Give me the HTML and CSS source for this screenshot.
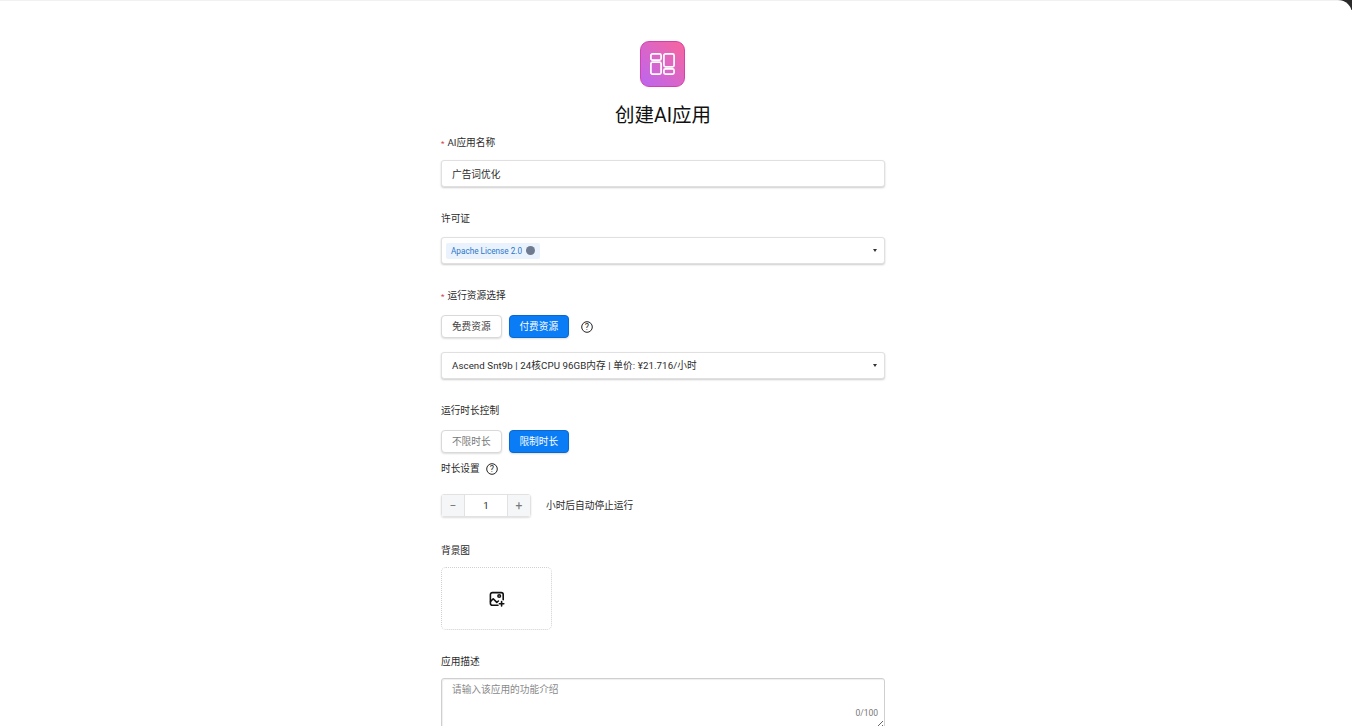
FILE: index.html
```html
<!DOCTYPE html>
<html lang="zh-CN">
<head>
  <meta charset="UTF-8" />
  <meta name="viewport" content="width=device-width, initial-scale=1.0"/>
  <title>创建AI应用</title>
  <link rel="stylesheet" href="styles.css">
</head>
<body>
  <div class="corner"></div>

  <main class="page">
    <div class="app-icon">
      <svg viewBox="0 0 25 22" width="25" height="22" fill="none" stroke="#fff" stroke-width="1.7">
        <rect x="0.9" y="0.9" width="10.2" height="6.2" rx="1.6"/>
        <rect x="0.9" y="9.2" width="10.2" height="11.9" rx="1.6"/>
        <rect x="13.9" y="0.9" width="10.2" height="12.9" rx="1.6"/>
        <rect x="13.9" y="15.9" width="10.2" height="5.2" rx="1.6"/>
      </svg>
    </div>
    <h1>创建AI应用</h1>

    <form class="form">
      <div class="field">
        <label class="required">AI应用名称</label>
        <input class="text-input" type="text" value="广告词优化">
      </div>

      <div class="field">
        <label class="gap-m">许可证</label>
        <div class="select tag-select">
          <span class="tag">Apache License 2.0 <i class="tag-close"></i></span>
          <span class="caret"></span>
        </div>
      </div>

      <div class="field">
        <label class="required gap-l">运行资源选择</label>
        <div class="btn-row">
          <button type="button" class="btn">免费资源</button>
          <button type="button" class="btn active">付费资源</button>
          <svg class="help help-row" viewBox="0 0 12 12" width="12" height="12">
            <circle cx="6" cy="6" r="5.3" fill="none" stroke="#222" stroke-width="1"/>
            <text x="6" y="9" text-anchor="middle" class="help-mark">?</text>
          </svg>
        </div>
        <div class="select">
          <span class="spec">Ascend Snt9b | 24核CPU 96GB内存 | 单价: ¥21.716/小时</span>
          <span class="caret"></span>
        </div>
      </div>

      <div class="field">
        <label class="gap-l">运行时长控制</label>
        <div class="btn-row">
          <button type="button" class="btn muted">不限时长</button>
          <button type="button" class="btn active">限制时长</button>
        </div>
        <label class="sub-label">时长设置
          <svg class="help" viewBox="0 0 12 12" width="12" height="12">
            <circle cx="6" cy="6" r="5.3" fill="none" stroke="#222" stroke-width="1"/>
            <text x="6" y="9" text-anchor="middle" class="help-mark">?</text>
          </svg>
        </label>
        <div class="stepper-row">
          <div class="stepper">
            <span class="step">−</span>
            <span class="step-value">1</span>
            <span class="step">+</span>
          </div>
          <span>小时后自动停止运行</span>
        </div>
      </div>

      <div class="field">
        <label class="gap-s">背景图</label>
        <div class="upload">
          <svg viewBox="0 0 16 16" width="16" height="16" fill="none" stroke="#111" stroke-width="1.6" stroke-linecap="round" stroke-linejoin="round">
            <path d="M9 14.2H3.4a2 2 0 0 1-2-2V3.6a2 2 0 0 1 2-2h8.8a2 2 0 0 1 2 2v5.2"/>
            <path d="M1.6 10.4l2.6-2.6 3.6 3.6 1.6-1.4"/>
            <circle cx="10.2" cy="5" r="1.3"/>
            <path d="M12.6 10.6v4.4M10.4 12.8h4.4"/>
          </svg>
        </div>
      </div>

      <div class="field">
        <label class="gap-s">应用描述</label>
        <div class="textarea-wrap">
          <textarea class="textarea" placeholder="请输入该应用的功能介绍"></textarea>
          <span class="count">0/100</span>
        </div>
      </div>
    </form>
  </main>
</body>
</html>
```

FILE: styles.css
```css
:root {
  --primary: #0a7cf5;
  --line: #e0e0e0;
  --fg: #2b2b2b;
}

* {
  box-sizing: border-box;
}

html, body {
  height: 726px;
  overflow: hidden;
}

body {
  margin: 0;
  background: #fff;
  color: var(--fg);
  font-family: "Roboto", "Noto Sans CJK SC", sans-serif;
  font-size: 9.7px;
  line-height: 14px;
  border-top: 1px solid #f1f1f1;
}

.corner {
  position: absolute;
  top: 0;
  right: 0;
  width: 14px;
  height: 10px;
  overflow: hidden;
}

.corner::before {
  content: "";
  position: absolute;
  top: 0;
  right: 0;
  width: 40px;
  height: 40px;
  border-top-right-radius: 14px;
  box-shadow: 10px -10px 0 10px #2a2a2a;
}

.page {
  display: flex;
  flex-direction: column;
  align-items: center;
  padding: 40px 26px 0 0;
}

.app-icon {
  width: 45px;
  height: 46px;
  margin-right: 1px;
  border-radius: 9px;
  border: 1px solid #d63fae;
  background: linear-gradient(45deg, #bb66f2, #f9659c);
  display: flex;
  align-items: center;
  justify-content: center;
}

h1 {
  height: 28px;
  margin: 15px 0 0;
  font-size: 19.5px;
  line-height: 28px;
  font-weight: 400;
  color: #111;
}

.form {
  width: 444px;
  display: flex;
  flex-direction: column;
  gap: 24px;
  margin-top: 5px;
}

.field {
  display: flex;
  flex-direction: column;
}

.field > label {
  height: 14px;
  line-height: 16px;
  margin-bottom: 11px;
}

.field > .gap-s {
  margin-bottom: 10px;
}

.field > .gap-m {
  margin-bottom: 12px;
}

.field > .gap-l {
  margin-bottom: 13px;
}

.required::before {
  content: "*";
  color: #d9363e;
  font-size: 8px;
  margin-right: 3px;
}

.text-input,
.select {
  width: 100%;
  height: 27px;
  border: 1px solid var(--line);
  border-radius: 3px;
  box-shadow: 0 1px 2px #0003;
  background: #fff;
  font: inherit;
  color: var(--fg);
}

.text-input {
  padding: 0 10px;
}

.select {
  padding: 0 10px;
  display: flex;
  align-items: center;
  justify-content: space-between;
}

.spec {
  letter-spacing: 0.08px;
}

.tag-select {
  padding-left: 4px;
}

.tag {
  display: flex;
  align-items: center;
  gap: 4px;
  height: 16px;
  padding: 0 5px;
  border-radius: 2px;
  background: #eaf3fd;
  color: #2a76c9;
  font-size: 8.2px;
}

.tag-close {
  width: 9px;
  height: 9px;
  border-radius: 50%;
  background: #6e7a90;
}

.caret {
  width: 0;
  height: 0;
  border-left: 2.5px solid transparent;
  border-right: 2.5px solid transparent;
  border-top: 3px solid #333;
  margin-right: -3px;
}

.btn-row {
  display: flex;
  align-items: center;
  gap: 7px;
}

.field > .btn-row + .select {
  margin-top: 14px;
}

.btn {
  width: 60.5px;
  height: 23px;
  padding: 0;
  border: 1px solid #d9d9d9;
  border-radius: 4px;
  background: #fff;
  box-shadow: 0 1px 2px #0002;
  color: #444;
  font: inherit;
}

.btn.muted {
  color: #777;
}

.btn.active {
  background: var(--primary);
  border-color: #0a68d0;
  color: #fff;
}

.help {
  display: block;
}

.help-row {
  margin-left: 5px;
}

.help-mark {
  font-size: 9px;
  fill: #222;
}

.sub-label {
  display: flex;
  align-items: center;
  gap: 6px;
  margin-top: 9px;
}

.field > .sub-label {
  margin-bottom: 18px;
}

.stepper-row {
  display: flex;
  align-items: center;
  gap: 15px;
  margin-bottom: 2px;
}

.stepper {
  width: 90px;
  height: 23px;
  display: flex;
  border: 1px solid #e2e2e2;
  border-radius: 3px;
  box-shadow: 0 1px 2px #0002;
}

.step {
  width: 22px;
  background: #f5f6f7;
  color: #777;
  font-size: 12px;
  display: flex;
  align-items: center;
  justify-content: center;
}

.step-value {
  flex: 1;
  display: flex;
  align-items: center;
  justify-content: center;
  border-left: 1px solid #e2e2e2;
  border-right: 1px solid #e2e2e2;
}

.upload {
  width: 111px;
  height: 63px;
  border: 1px dotted #cfcfcf;
  border-radius: 5px;
  display: flex;
  align-items: center;
  justify-content: center;
}

.textarea-wrap {
  position: relative;
}

.textarea {
  display: block;
  width: 100%;
  height: 52px;
  padding: 4px 10px;
  border: 1px solid #cfcfcf;
  border-radius: 3px;
  box-shadow: inset 1px 1px 1px #0001;
  font: inherit;
  color: var(--fg);
}

.textarea::placeholder {
  color: #8a8a8a;
}

.count {
  position: absolute;
  right: 7px;
  bottom: 10px;
  color: #777;
  font-size: 8.5px;
}
```
